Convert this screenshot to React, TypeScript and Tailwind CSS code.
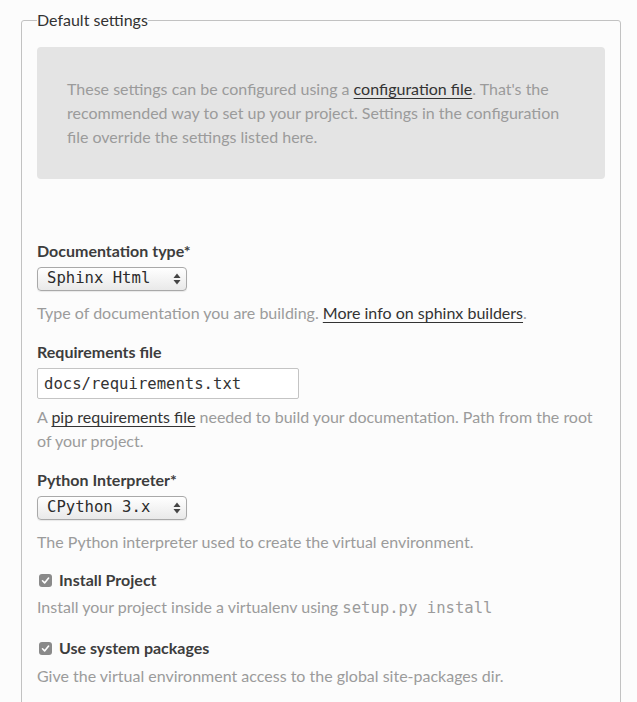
import { FC, ReactNode } from "react";

const mono = "font-['DejaVu_Sans_Mono',Menlo,monospace]";

const SelectBox: FC<{ value: string }> = ({ value }) => {
  return (
    <div className="mt-[4px] flex h-[24px] w-[150px] items-center justify-between rounded-[4px] border border-[#a9a9a9] bg-gradient-to-b from-[#ffffff] to-[#e9e9e9] pl-[9px] pr-[5px] shadow-[0_1px_1px_rgba(0,0,0,0.08)]">
      <span className={`${mono} text-[15.6px] leading-none text-[#2b2b2b]`}>
        {value}
      </span>
      {/* up / down arrows */}
      <svg width="8" height="12" viewBox="0 0 8 12">
        <path d="M4 0.5 L7.5 5 L0.5 5 Z" fill="#444" />
        <path d="M4 11.5 L7.5 7 L0.5 7 Z" fill="#444" />
      </svg>
    </div>
  );
};

const Help: FC<{ children: ReactNode; className?: string }> = ({
  children,
  className = "",
}) => <div className={`text-[16px] leading-[24px] text-[#9b9b9b] ${className}`}>{children}</div>;

const Label: FC<{ children: ReactNode }> = ({ children }) => (
  <div className="text-[16px] font-bold leading-[24px] text-[#3d3d3d]">{children}</div>
);

const Link: FC<{ children: ReactNode }> = ({ children }) => (
  <a href="#" className="text-[#333] underline underline-offset-[3px] decoration-[1px]">
    {children}
  </a>
);

const CheckRow: FC<{ label: string }> = ({ label }) => (
  <div className="flex items-center">
    <span className="ml-[2px] mr-[7px] flex h-[13px] w-[13px] items-center justify-center rounded-[3px] bg-[#8a8a8a]">
      <svg width="9" height="9" viewBox="0 0 9 9">
        <path d="M1.5 4.8 L3.6 6.9 L7.6 2" stroke="#fff" strokeWidth="1.6" fill="none" strokeLinecap="round" strokeLinejoin="round" />
      </svg>
    </span>
    <span className="text-[16px] font-bold leading-[24px] text-[#3d3d3d]">{label}</span>
  </div>
);

export default function App() {
  return (
    <div className="min-h-[702px] w-full overflow-hidden bg-[#fcfcfc] font-['Lato','Noto_Sans',sans-serif]">
      <fieldset className="ml-[21px] mt-[8px] w-[600px] rounded-[3px] border border-[#c2c2c2] px-[15px] pb-[15px] pt-[15px]">
        <legend className="text-[16px] leading-[24px] text-[#333]">Default settings</legend>

        {/* Config file notice */}
        <div className="rounded-[4px] bg-[#e4e4e4] p-[30px] text-[16px] leading-[24px] text-[#9b9b9b]">
          These settings can be configured using a <Link>configuration file</Link>. That's the
          recommended way to set up your project. Settings in the configuration file override
          the settings listed here.
        </div>

        <div className="mt-[60px]">
          {/* Documentation type */}
          <div className="mb-[15px]">
            <Label>Documentation type*</Label>
            <SelectBox value="Sphinx Html" />
            <Help className="mt-[10px]">
              Type of documentation you are building. <Link>More info on sphinx builders</Link>.
            </Help>
          </div>

          {/* Requirements file */}
          <div className="mb-[15px]">
            <Label>Requirements file</Label>
            <input
              readOnly
              value="docs/requirements.txt"
              className={`mt-[4px] block h-[31px] w-[262px] rounded-[2px] border border-[#c4c4c4] bg-white px-[6px] ${mono} text-[15.6px] text-[#333] outline-none`}
            />
            <Help className="mt-[6px]">
              A <Link>pip requirements file</Link> needed to build your documentation. Path from
              the root of your project.
            </Help>
          </div>

          {/* Python interpreter */}
          <div className="mb-[14px]">
            <Label>Python Interpreter*</Label>
            <SelectBox value="CPython 3.x" />
            <Help className="mt-[10px]">
              The Python interpreter used to create the virtual environment.
            </Help>
          </div>

          {/* Install project */}
          <div className="mb-[16px]">
            <CheckRow label="Install Project" />
            <Help className="mt-[3px]">
              Install your project inside a virtualenv using{" "}
              <code className={`${mono} text-[15.6px]`}>setup.py install</code>
            </Help>
          </div>

          {/* System packages */}
          <div className="mb-[15px]">
            <CheckRow label="Use system packages" />
            <Help className="mt-[4px]">
              Give the virtual environment access to the global site-packages dir.
            </Help>
          </div>
        </div>
      </fieldset>
    </div>
  );
}
